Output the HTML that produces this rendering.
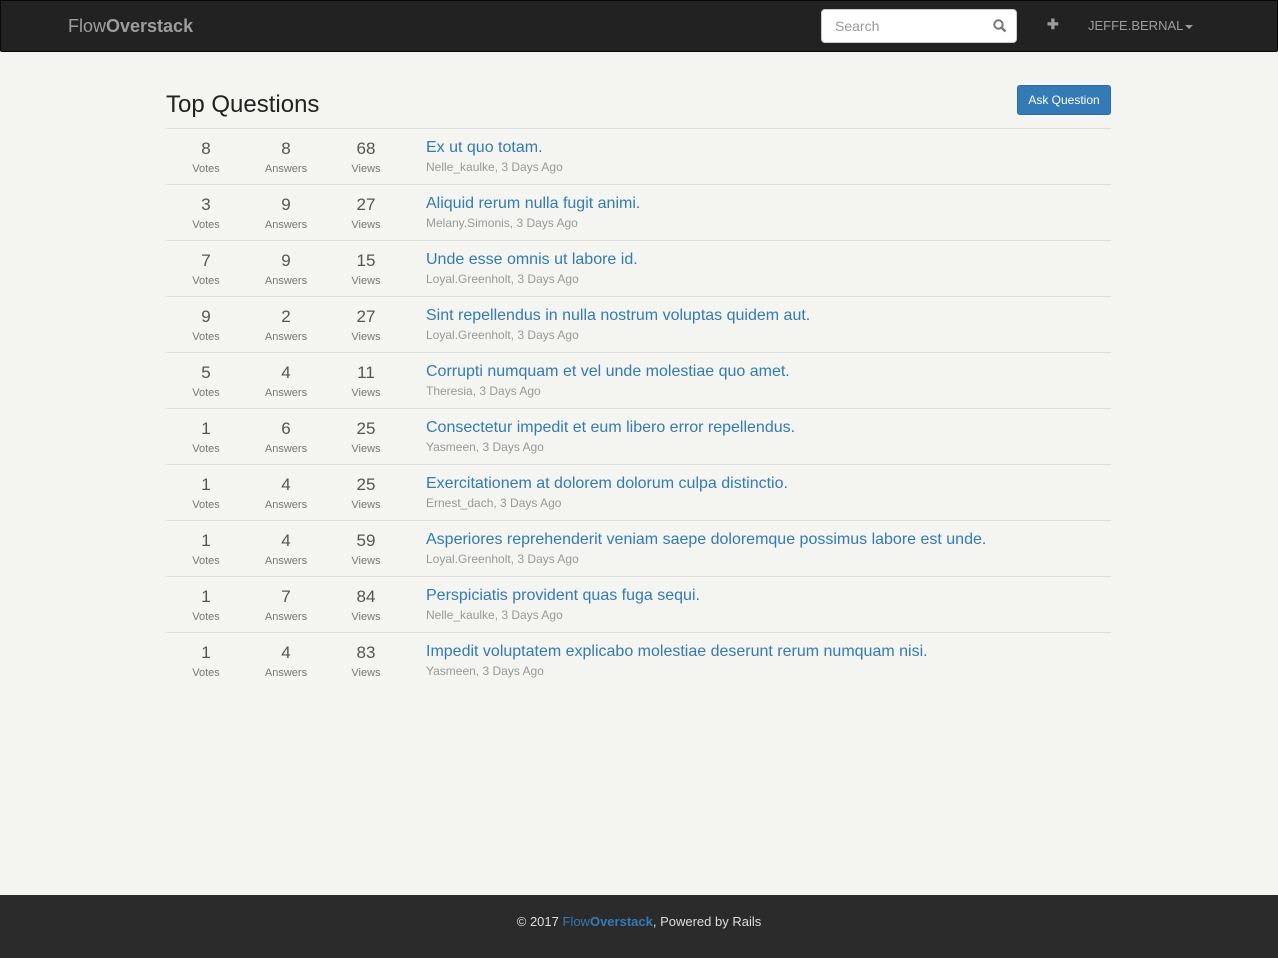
<!DOCTYPE html>
<html><head><meta charset="utf-8"><style>
*{box-sizing:border-box;margin:0;padding:0}
body{width:1278px;height:958px;background:#f4f4f0;font-family:"Liberation Sans",sans-serif;position:relative;overflow:hidden}
.nav{position:absolute;left:0;top:0;width:1278px;height:52px;background:#222;border:1px solid #080808;border-radius:0 0 2px 2px}
.brand{position:absolute;left:67px;top:15px;font-size:18px;color:#9d9d9d}
.search{position:absolute;left:820px;top:8px;width:196px;height:34px;background:#fff;border-radius:4px;border:1px solid #ccc}
.search span{position:absolute;left:13px;top:8px;font-size:14px;color:#999}
.search svg{position:absolute;right:9px;top:9px}
.plus{position:absolute;left:1046px;top:15px;color:#9d9d9d;font-size:14px;font-weight:bold}
.user{position:absolute;left:1087px;top:17px;color:#9d9d9d;font-size:13px}
.caret{display:inline-block;border-top:4px solid #9d9d9d;border-left:4px solid transparent;border-right:4px solid transparent;vertical-align:middle;margin-left:2px}
h1{position:absolute;left:166px;top:91px;font-size:24px;font-weight:normal;color:#222}
.btn{position:absolute;left:1017px;top:85px;width:94px;height:30px;background:#337ab7;border:1px solid #2e6da4;border-radius:3px;color:#fff;font-size:12px;text-align:center;line-height:28px}
.list{position:absolute;left:166px;top:128px;width:945px}
.row{height:56px;border-top:1px solid #ddd;position:relative}
.c{position:absolute;top:10px;width:80px;text-align:center;color:#555}
.c b{display:block;font-weight:normal;font-size:17px;line-height:20px}
.c i{display:block;font-style:normal;font-size:11px;color:#777;margin-top:4px}
.t{position:absolute;left:260px;top:9px}
.t a{color:#337ab7;font-size:16px;text-decoration:none;display:block;line-height:20px}
.t small{color:#999;font-size:12px;display:block;margin-top:2px}
.foot{position:absolute;left:0;top:895px;width:1278px;height:63px;background:#2b2b2b;text-align:center;color:#ddd;font-size:13px;padding-top:19px}
.foot a{color:#337ab7;text-decoration:none}
</style></head><body>
<div class="nav">
<div class="brand">Flow<b>Overstack</b></div>
<div class="search"><span>Search</span><svg width="14" height="14" viewBox="0 0 14 14"><circle cx="5.5" cy="5.5" r="4.2" fill="none" stroke="#777" stroke-width="2"/><line x1="8.5" y1="8.5" x2="12.5" y2="12.5" stroke="#777" stroke-width="2.4"/></svg></div>
<div class="plus">✚</div>
<div class="user">JEFFE.BERNAL<span class="caret"></span></div>
</div>
<h1>Top Questions</h1>
<div class="btn">Ask Question</div>
<div class="list">
<div class="row"><div class="c" style="left:0"><b>8</b><i>Votes</i></div><div class="c" style="left:80px"><b>8</b><i>Answers</i></div><div class="c" style="left:160px"><b>68</b><i>Views</i></div><div class="t"><a>Ex ut quo totam.</a><small>Nelle_kaulke, 3 Days Ago</small></div></div>
<div class="row"><div class="c" style="left:0"><b>3</b><i>Votes</i></div><div class="c" style="left:80px"><b>9</b><i>Answers</i></div><div class="c" style="left:160px"><b>27</b><i>Views</i></div><div class="t"><a>Aliquid rerum nulla fugit animi.</a><small>Melany.Simonis, 3 Days Ago</small></div></div>
<div class="row"><div class="c" style="left:0"><b>7</b><i>Votes</i></div><div class="c" style="left:80px"><b>9</b><i>Answers</i></div><div class="c" style="left:160px"><b>15</b><i>Views</i></div><div class="t"><a>Unde esse omnis ut labore id.</a><small>Loyal.Greenholt, 3 Days Ago</small></div></div>
<div class="row"><div class="c" style="left:0"><b>9</b><i>Votes</i></div><div class="c" style="left:80px"><b>2</b><i>Answers</i></div><div class="c" style="left:160px"><b>27</b><i>Views</i></div><div class="t"><a>Sint repellendus in nulla nostrum voluptas quidem aut.</a><small>Loyal.Greenholt, 3 Days Ago</small></div></div>
<div class="row"><div class="c" style="left:0"><b>5</b><i>Votes</i></div><div class="c" style="left:80px"><b>4</b><i>Answers</i></div><div class="c" style="left:160px"><b>11</b><i>Views</i></div><div class="t"><a>Corrupti numquam et vel unde molestiae quo amet.</a><small>Theresia, 3 Days Ago</small></div></div>
<div class="row"><div class="c" style="left:0"><b>1</b><i>Votes</i></div><div class="c" style="left:80px"><b>6</b><i>Answers</i></div><div class="c" style="left:160px"><b>25</b><i>Views</i></div><div class="t"><a>Consectetur impedit et eum libero error repellendus.</a><small>Yasmeen, 3 Days Ago</small></div></div>
<div class="row"><div class="c" style="left:0"><b>1</b><i>Votes</i></div><div class="c" style="left:80px"><b>4</b><i>Answers</i></div><div class="c" style="left:160px"><b>25</b><i>Views</i></div><div class="t"><a>Exercitationem at dolorem dolorum culpa distinctio.</a><small>Ernest_dach, 3 Days Ago</small></div></div>
<div class="row"><div class="c" style="left:0"><b>1</b><i>Votes</i></div><div class="c" style="left:80px"><b>4</b><i>Answers</i></div><div class="c" style="left:160px"><b>59</b><i>Views</i></div><div class="t"><a>Asperiores reprehenderit veniam saepe doloremque possimus labore est unde.</a><small>Loyal.Greenholt, 3 Days Ago</small></div></div>
<div class="row"><div class="c" style="left:0"><b>1</b><i>Votes</i></div><div class="c" style="left:80px"><b>7</b><i>Answers</i></div><div class="c" style="left:160px"><b>84</b><i>Views</i></div><div class="t"><a>Perspiciatis provident quas fuga sequi.</a><small>Nelle_kaulke, 3 Days Ago</small></div></div>
<div class="row"><div class="c" style="left:0"><b>1</b><i>Votes</i></div><div class="c" style="left:80px"><b>4</b><i>Answers</i></div><div class="c" style="left:160px"><b>83</b><i>Views</i></div><div class="t"><a>Impedit voluptatem explicabo molestiae deserunt rerum numquam nisi.</a><small>Yasmeen, 3 Days Ago</small></div></div>
</div>
<div class="foot">© 2017 <a>Flow<b>Overstack</b></a>, Powered by Rails</div>
</body></html>
